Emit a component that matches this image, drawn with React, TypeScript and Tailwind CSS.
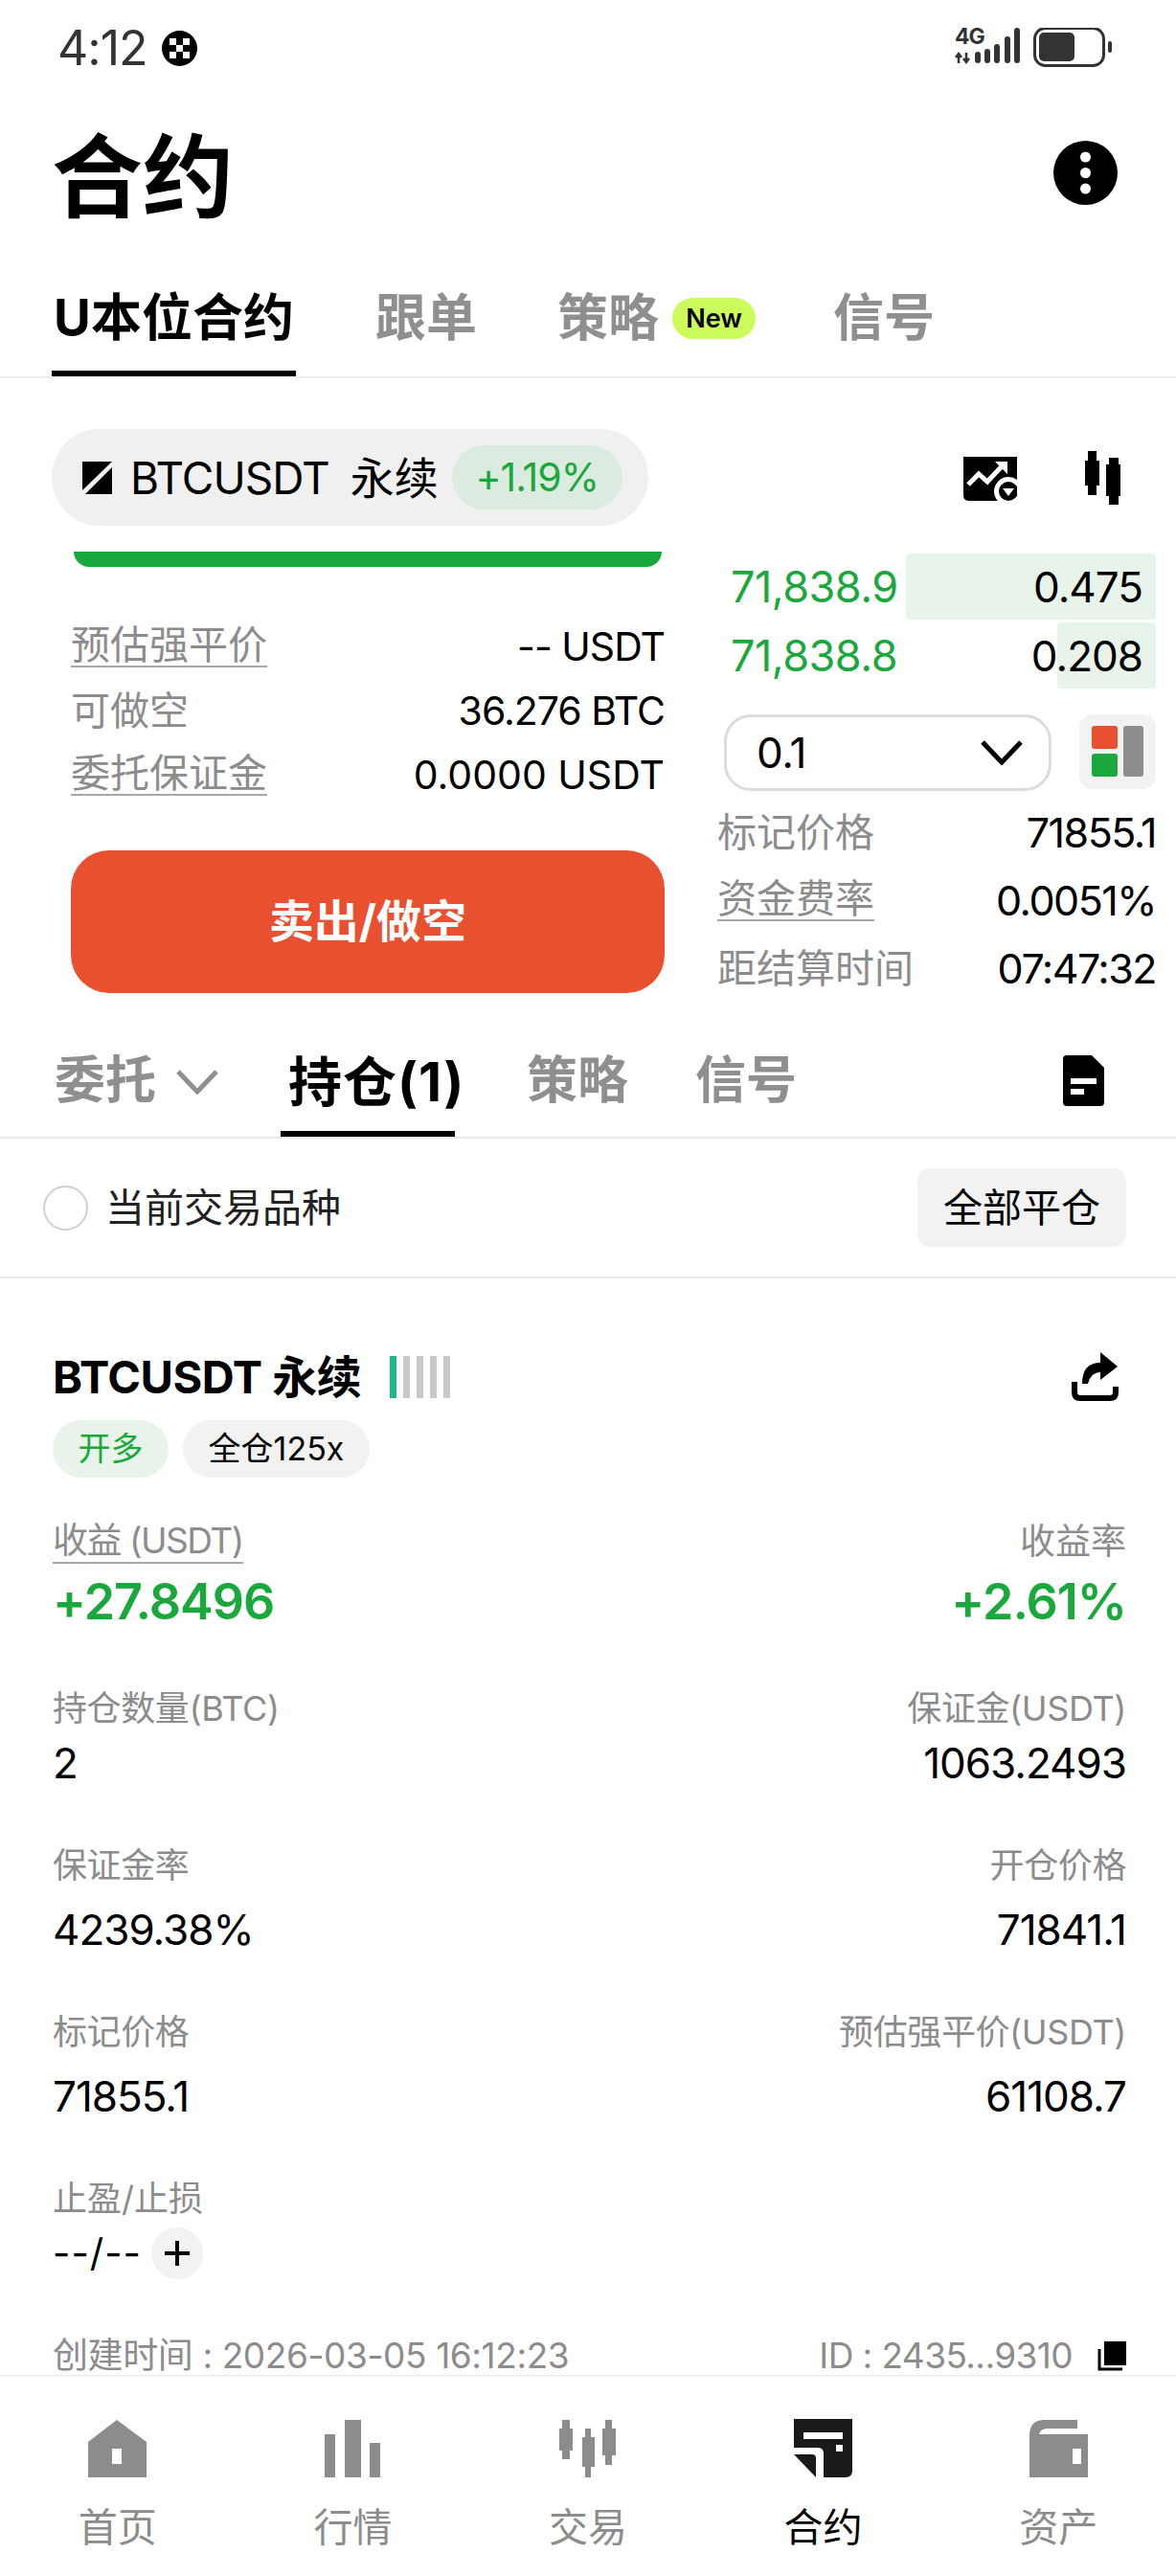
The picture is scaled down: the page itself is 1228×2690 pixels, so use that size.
const font = "[font-family:Inter,'Noto_Sans_CJK_SC',sans-serif]";

function Underlined({ children }: { children: React.ReactNode }) {
  return (
    <span className="inline-block border-b-2 border-[#a8a8a8] pb-[3px] leading-[38px] text-[#8c8c8c]">
      {children}
    </span>
  );
}

function StatusBar() {
  return (
    <div className="flex h-[100px] items-center justify-between pl-[60px] pr-[66px]">
      <div className="flex items-center gap-[15px]">
        <span className="text-[50px] leading-none tracking-[-1px] text-[#333]">4:12</span>
        <svg width="37" height="37" viewBox="0 0 37 37">
          <circle cx="18.5" cy="18.5" r="18.5" fill="#000" />
          <rect x="8" y="8" width="7" height="7" fill="#fff" />
          <rect x="22" y="8" width="7" height="7" fill="#fff" />
          <rect x="15" y="15" width="7" height="7" fill="#fff" />
          <rect x="8" y="22" width="7" height="7" fill="#fff" />
          <rect x="22" y="22" width="7" height="7" fill="#fff" />
        </svg>
      </div>
      <div className="relative h-[42px] w-[165px]">
        <span className="absolute left-0 top-[-3px] text-[23px] font-bold leading-[24px] tracking-[-1px] text-[#333]">4G</span>
        <svg width="165" height="42" viewBox="0 0 165 42">
          <path d="M4 37V28M1 31L4 27L7 31M12 26V35M9 32L12 36L15 32" stroke="#333" strokeWidth="2.5" fill="none" />
          <rect x="21" y="25" width="6" height="12" rx="3" fill="#333" />
          <rect x="31" y="22" width="6" height="15" rx="3" fill="#333" />
          <rect x="41" y="17" width="6" height="20" rx="3" fill="#333" />
          <rect x="52" y="9" width="6" height="28" rx="3" fill="#333" />
          <rect x="62" y="0" width="6" height="37" rx="3" fill="#333" />
          <rect x="83.5" y="0.5" width="72" height="39" rx="11" fill="none" stroke="#333" strokeWidth="3" />
          <rect x="88" y="5" width="37" height="30" rx="5" fill="#333" />
          <rect x="160" y="14" width="4" height="12" rx="2" fill="#333" />
        </svg>
      </div>
    </div>
  );
}

function TitleRow() {
  return (
    <div className="flex h-[190px] items-center justify-between pb-[20px] pl-[54px] pr-[61px]">
      <h1 className="text-[95px] font-bold leading-none text-black">合约</h1>
      <svg width="67" height="67" viewBox="0 0 67 67" className="-mt-[10px]">
        <circle cx="33.5" cy="33.5" r="33.5" fill="#000" />
        <circle cx="33.5" cy="17" r="5.5" fill="#fff" />
        <circle cx="33.5" cy="33.5" r="5.5" fill="#fff" />
        <circle cx="33.5" cy="50" r="5.5" fill="#fff" />
      </svg>
    </div>
  );
}

function TopTabs() {
  return (
    <div className="flex h-[105px] items-start border-b-2 border-[#f0f0f0] pl-[54px] text-[53px] font-bold leading-none text-[#8f8f8f]">
      <div className="flex h-[103px] w-[255px] justify-center border-b-[6px] border-black pt-[16px] text-black">
        U本位合约
      </div>
      <span className="ml-[83px] pt-[16px]">跟单</span>
      <span className="ml-[84px] pt-[16px]">策略</span>
      <span className="ml-[14px] mt-[21px] flex h-[43px] w-[87px] items-center justify-center rounded-full bg-[#ccfc5b] text-[27px] font-semibold text-black">
        New
      </span>
      <span className="ml-[81px] pt-[16px]">信号</span>
    </div>
  );
}

function PairRow() {
  return (
    <div className="flex h-[181px] items-start justify-between pl-[54px] pr-[58px] pt-[53px]">
      <div className="flex h-[101px] w-[623px] items-center rounded-full bg-[#f0f0f0] pl-[32px] text-[46px] leading-none text-black">
        <svg width="31" height="34" viewBox="0 0 31 34">
          <path d="M0 0H31L0 30Z" fill="#000" />
          <path d="M31 6V34H3Z" fill="#000" />
        </svg>
        <span className="ml-[19px] tracking-[-1px]">BTCUSDT</span>
        <span className="ml-[22px]">永续</span>
        <span className="ml-[14px] flex h-[67px] w-[178px] items-center justify-center rounded-full bg-[#dcebdf] text-[41px] tracking-[-1px] text-[#1aa83c]">
          +1.19%
        </span>
      </div>
      <div className="mt-[23px] flex items-start gap-[71px]">
        <svg width="56" height="46" viewBox="0 0 56 46" className="mt-[6px]">
          <path d="M0 0H56V46H6Q0 46 0 40Z" fill="#000" />
          <path d="M5 29L16 18L25 26L41 9" stroke="#fff" strokeWidth="5" fill="none" />
          <path d="M33 5H46V18Z" fill="#fff" />
          <circle cx="47" cy="36" r="15" fill="#fff" />
          <circle cx="47" cy="36" r="10" fill="#000" />
          <path d="M41 33H53L47 41Z" fill="#fff" />
        </svg>
        <svg width="37" height="56" viewBox="0 0 37 56">
          <path d="M3 0H12V10H15V36H12V46H3V36H0V10H3Z" fill="#000" />
          <path d="M25 7H35V14H37V47H35V56H25V47H22V14H25Z" fill="#000" />
        </svg>
      </div>
    </div>
  );
}

function OrderForm() {
  const rows = [
    { label: "预估强平价", value: "-- USDT", line: true, tight: true },
    { label: "可做空", value: "36.276 BTC", line: false, tight: true },
    { label: "委托保证金", value: "0.0000 USDT", line: true, tight: false },
  ];
  return (
    <div className="w-[620px] shrink-0">
      <div className="mx-[3px] h-[16px] rounded-b-[18px] bg-[#1aa83c]" />
      <div className="mt-[64px] flex flex-col gap-[29px] text-[41px] leading-[38px]">
        {rows.map((r) => (
          <div key={r.label} className="flex h-[38px] items-center justify-between">
            {r.line ? <Underlined>{r.label}</Underlined> : <span className="text-[#8c8c8c]">{r.label}</span>}
            <span className={r.tight ? "tracking-[-1px] text-black" : "text-black"}>{r.value}</span>
          </div>
        ))}
      </div>
      <button className="mt-[60px] flex h-[149px] w-full items-center justify-center rounded-[40px] bg-[#e9502f] text-[47px] font-bold text-white">
        卖出/做空
      </button>
    </div>
  );
}

function BookRow({ price, qty, depth }: { price: string; qty: string; depth: number }) {
  return (
    <div className="flex h-[69px] items-center leading-none">
      <span className="ml-[14px] w-[183px] text-[45px] tracking-[-0.5px] text-[#1aa83c]">{price}</span>
      <div className="relative flex h-full flex-1 items-center justify-end pr-[14px] text-[44px] tracking-[-1px] text-black">
        <div className="absolute inset-y-0 right-0 rounded-[4px] bg-[#e8f4ea]" style={{ width: depth }} />
        <span className="relative">{qty}</span>
      </div>
    </div>
  );
}

function MarketPanel() {
  return (
    <div className="flex-1">
      <div className="flex flex-col gap-[3px] pt-[2px]">
        <BookRow price="71,838.9" qty="0.475" depth={261} />
        <BookRow price="71,838.8" qty="0.208" depth={103} />
      </div>
      <div className="ml-[7px] mt-[27px] flex items-start justify-between">
        <div className="flex h-[80px] w-[342px] items-center justify-between rounded-[28px] border-[3px] border-[#dcdcdc] pl-[31px] pr-[27px] text-[44px] tracking-[-0.5px] text-black">
          0.1
          <svg width="44" height="26" viewBox="0 0 44 26">
            <path d="M2 2L22 23L42 2" fill="none" stroke="#000" strokeWidth="5" />
          </svg>
        </div>
        <div className="flex h-[78px] w-[80px] items-center justify-center rounded-[14px] bg-[#f2f2f2]">
          <svg width="54" height="54" viewBox="0 0 54 54">
            <rect x="0" y="0" width="27" height="24" rx="3" fill="#e9502f" />
            <rect x="0" y="29" width="27" height="24" rx="3" fill="#1aa83c" />
            <rect x="33" y="0" width="21" height="53" rx="3" fill="#8c8c8c" />
          </svg>
        </div>
      </div>
      <div className="mt-[24px] flex flex-col gap-[33px] text-[41px] leading-[38px]">
        <div className="flex h-[38px] items-center justify-between">
          <span className="text-[#8c8c8c]">标记价格</span>
          <span className="text-[43px] tracking-[-1.5px] text-black">71855.1</span>
        </div>
        <div className="flex h-[38px] items-center justify-between">
          <Underlined>资金费率</Underlined>
          <span className="text-[43px] tracking-[-1.5px] text-black">0.0051%</span>
        </div>
        <div className="flex h-[38px] items-center justify-between">
          <span className="text-[#8c8c8c]">距结算时间</span>
          <span className="text-[43px] tracking-[-1.5px] text-black">07:47:32</span>
        </div>
      </div>
    </div>
  );
}

function TradeSection() {
  return (
    <div className="flex h-[511px] gap-[55px] pl-[74px] pr-[21px]">
      <OrderForm />
      <MarketPanel />
    </div>
  );
}

function SubTabs() {
  return (
    <div className="flex h-[102px] items-start border-b-2 border-[#e8e8e8] pl-[57px] pr-[75px] text-[53px] font-bold leading-none text-[#8f8f8f]">
      <span className="pt-[15px]">委托</span>
      <svg width="44" height="26" viewBox="0 0 44 26" className="ml-[21px] mt-[30px]">
        <path d="M2 2L22 23L42 2" fill="none" stroke="#8f8f8f" strokeWidth="5" />
      </svg>
      <div className="ml-[65px] h-[100px] w-[182px] whitespace-nowrap border-b-[6px] border-black pl-[8px] pt-[15px] text-[56px] tracking-[1px] text-black">
        持仓(1)
      </div>
      <span className="ml-[75px] pt-[15px]">策略</span>
      <span className="ml-[70px] pt-[15px]">信号</span>
      <svg width="43" height="53" viewBox="0 0 43 53" className="ml-auto mt-[15px]">
        <path d="M4 0H30L43 13V49Q43 53 39 53H4Q0 53 0 49V4Q0 0 4 0Z" fill="#000" />
        <rect x="8" y="24" width="27" height="6" fill="#fff" />
        <rect x="8" y="35" width="14" height="6" fill="#fff" />
      </svg>
    </div>
  );
}

function FilterRow() {
  return (
    <div className="flex h-[146px] items-center justify-between border-b-2 border-[#ececec] pl-[45px] pr-[52px]">
      <div className="flex items-center gap-[18px]">
        <div className="h-[47px] w-[47px] rounded-full border-2 border-[#cfcfcf]" />
        <span className="text-[41px] leading-none text-[#222]">当前交易品种</span>
      </div>
      <button className="h-[82px] w-[218px] rounded-[14px] bg-[#f2f2f2] text-[41px] leading-none text-black">
        全部平仓
      </button>
    </div>
  );
}

function Stat({ label, value, right, tight }: { label: string; value: string; right?: boolean; tight?: boolean }) {
  return (
    <div className={right ? "text-right" : ""}>
      <div className="text-[36px] leading-[40px] tracking-[-0.4px] text-[#8c8c8c]">{label}</div>
      <div className={`text-[44px] leading-[44px] tracking-[-1px] text-black ${tight ? "mt-[15px]" : "mt-[25px]"}`}>{value}</div>
    </div>
  );
}

function PositionCard() {
  return (
    <div className="pl-[55px] pr-[52px] pt-[77px]">
      <div className="flex items-center justify-between">
        <div className="flex items-center">
          <span className="text-[47px] font-bold leading-[48px] tracking-[-0.5px] text-black">BTCUSDT 永续</span>
          <div className="ml-[30px] flex gap-[7px]">
            <div className="h-[44px] w-[7px] bg-[#1ab98c]" />
            <div className="h-[44px] w-[7px] bg-[#c8c8c8]" />
            <div className="h-[44px] w-[7px] bg-[#c8c8c8]" />
            <div className="h-[44px] w-[7px] bg-[#c8c8c8]" />
            <div className="h-[44px] w-[7px] bg-[#c8c8c8]" />
          </div>
        </div>
        <svg width="49" height="52" viewBox="0 0 49 52" className="mr-[8px]">
          <path d="M30 0L48 15L30 29V21Q20 21 17 33H11Q11 11 30 11Z" fill="#000" />
          <path d="M3 31V42Q3 48 9 48H40Q46 48 46 42V36" fill="none" stroke="#000" strokeWidth="6" />
        </svg>
      </div>
      <div className="mt-[19px] flex gap-[15px] text-[34px] leading-none">
        <span className="flex h-[60px] w-[121px] items-center justify-center rounded-full bg-[#e8f4ea] text-[#1aa83c]">开多</span>
        <span className="flex h-[60px] w-[195px] items-center justify-center rounded-full bg-[#f2f2f2] text-black">全仓125x</span>
      </div>
      <div className="mt-[47px] flex items-start justify-between">
        <div>
          <div className="flex h-[40px] items-start text-[37px] tracking-[-1.5px]">
            <Underlined>收益 (USDT)</Underlined>
          </div>
          <div className="mt-[15px] text-[52px] font-semibold leading-[56px] tracking-[-1px] text-[#1aa83c]">+27.8496</div>
        </div>
        <div className="text-right">
          <div className="text-[37px] leading-[40px] text-[#8c8c8c]">收益率</div>
          <div className="mt-[15px] text-[52px] font-semibold leading-[56px] tracking-[-1px] text-[#1aa83c]">+2.61%</div>
        </div>
      </div>
      <div className="mt-[63px] grid grid-cols-2 gap-y-[65px]">
        <Stat label="持仓数量(BTC)" value="2" tight />
        <Stat label="保证金(USDT)" value="1063.2493" right tight />
        <Stat label="保证金率" value="4239.38%" />
        <Stat label="开仓价格" value="71841.1" right />
        <Stat label="标记价格" value="71855.1" />
        <Stat label="预估强平价(USDT)" value="61108.7" right />
      </div>
      <div className="mt-[65px]">
        <div className="text-[36px] leading-[40px] text-[#8c8c8c]">止盈/止损</div>
        <div className="mt-[10px] flex items-center gap-[10px]">
          <span className="text-[40px] leading-none tracking-[1px] text-black">--/--</span>
          <span className="flex h-[54px] w-[54px] items-center justify-center rounded-full bg-[#f2f2f2]">
            <svg width="28" height="28" viewBox="0 0 28 28">
              <path d="M14 1V27M1 14H27" stroke="#000" strokeWidth="4" />
            </svg>
          </span>
        </div>
      </div>
      <div className="mt-[60px] flex items-center justify-between text-[37px] leading-[40px] tracking-[-0.4px] text-[#8c8c8c]">
        <span>创建时间 : 2026-03-05 16:12:23</span>
        <span className="flex items-center gap-[26px] tracking-[-0.6px]">
          ID : 2435...9310
          <svg width="30" height="31" viewBox="0 0 30 31">
            <rect x="7" y="0" width="23" height="25" fill="#000" />
            <path d="M2 8V29H26" fill="none" stroke="#000" strokeWidth="3" />
          </svg>
        </span>
      </div>
    </div>
  );
}

const navItems = [
  {
    label: "首页",
    icon: (
      <svg width="61" height="60" viewBox="0 0 61 60">
        <path fillRule="evenodd" d="M30 0L61 23V60H0V23ZM25 30V46H35V30Z" fill="#8c8c8c" />
      </svg>
    ),
  },
  {
    label: "行情",
    icon: (
      <svg width="58" height="60" viewBox="0 0 58 60">
        <rect x="0" y="15" width="11" height="45" fill="#8c8c8c" />
        <rect x="21" y="0" width="17" height="60" fill="#8c8c8c" />
        <rect x="47" y="24" width="11" height="36" fill="#8c8c8c" />
      </svg>
    ),
  },
  {
    label: "交易",
    icon: (
      <svg width="59" height="60" viewBox="0 0 59 60">
        <path d="M3 0H11V9H14V32H11V41H3V32H0V9H3Z" fill="#8c8c8c" />
        <path d="M27 9H33V18H37V49H33V60H27V49H24V18H27Z" fill="#8c8c8c" />
        <path d="M48 0H55V9H59V37H55V47H48V37H45V9H48Z" fill="#8c8c8c" />
      </svg>
    ),
  },
  {
    label: "合约",
    active: true,
    icon: (
      <svg width="61" height="61" viewBox="0 0 61 61">
        <path d="M0 0H61V54Q61 61 54 61H31V36Q31 30 25 30H0Z" fill="#1a1a1a" />
        <path d="M0 37H19Q23 37 23 41V61Z" fill="#1a1a1a" />
        <rect x="10" y="14" width="41" height="7" fill="#fff" />
        <rect x="44" y="27" width="7" height="7" fill="#fff" />
      </svg>
    ),
  },
  {
    label: "资产",
    icon: (
      <svg width="61" height="60" viewBox="0 0 61 60">
        <path fillRule="evenodd" d="M0 60V16Q0 0 16 0H50V9H18Q12 9 10 15H61V60ZM45 30V46H54V30Z" fill="#8c8c8c" />
      </svg>
    ),
  },
];

function BottomNav() {
  return (
    <nav className="grid h-[210px] shrink-0 grid-cols-5 border-t-2 border-[#f0f0f0] bg-white pt-[43px]">
      {navItems.map((item) => (
        <div key={item.label} className="flex flex-col items-center">
          <div className="flex h-[62px] items-end">{item.icon}</div>
          <span className={`mt-[32px] text-[41px] leading-none ${item.active ? "text-black" : "text-[#8c8c8c]"}`}>
            {item.label}
          </span>
        </div>
      ))}
    </nav>
  );
}

export default function App() {
  return (
    <div className={`flex h-[2690px] w-[1228px] flex-col bg-white ${font}`}>
      <div className="min-h-0 flex-1">
        <StatusBar />
        <TitleRow />
        <TopTabs />
        <PairRow />
        <TradeSection />
        <SubTabs />
        <FilterRow />
        <PositionCard />
      </div>
      <BottomNav />
    </div>
  );
}
